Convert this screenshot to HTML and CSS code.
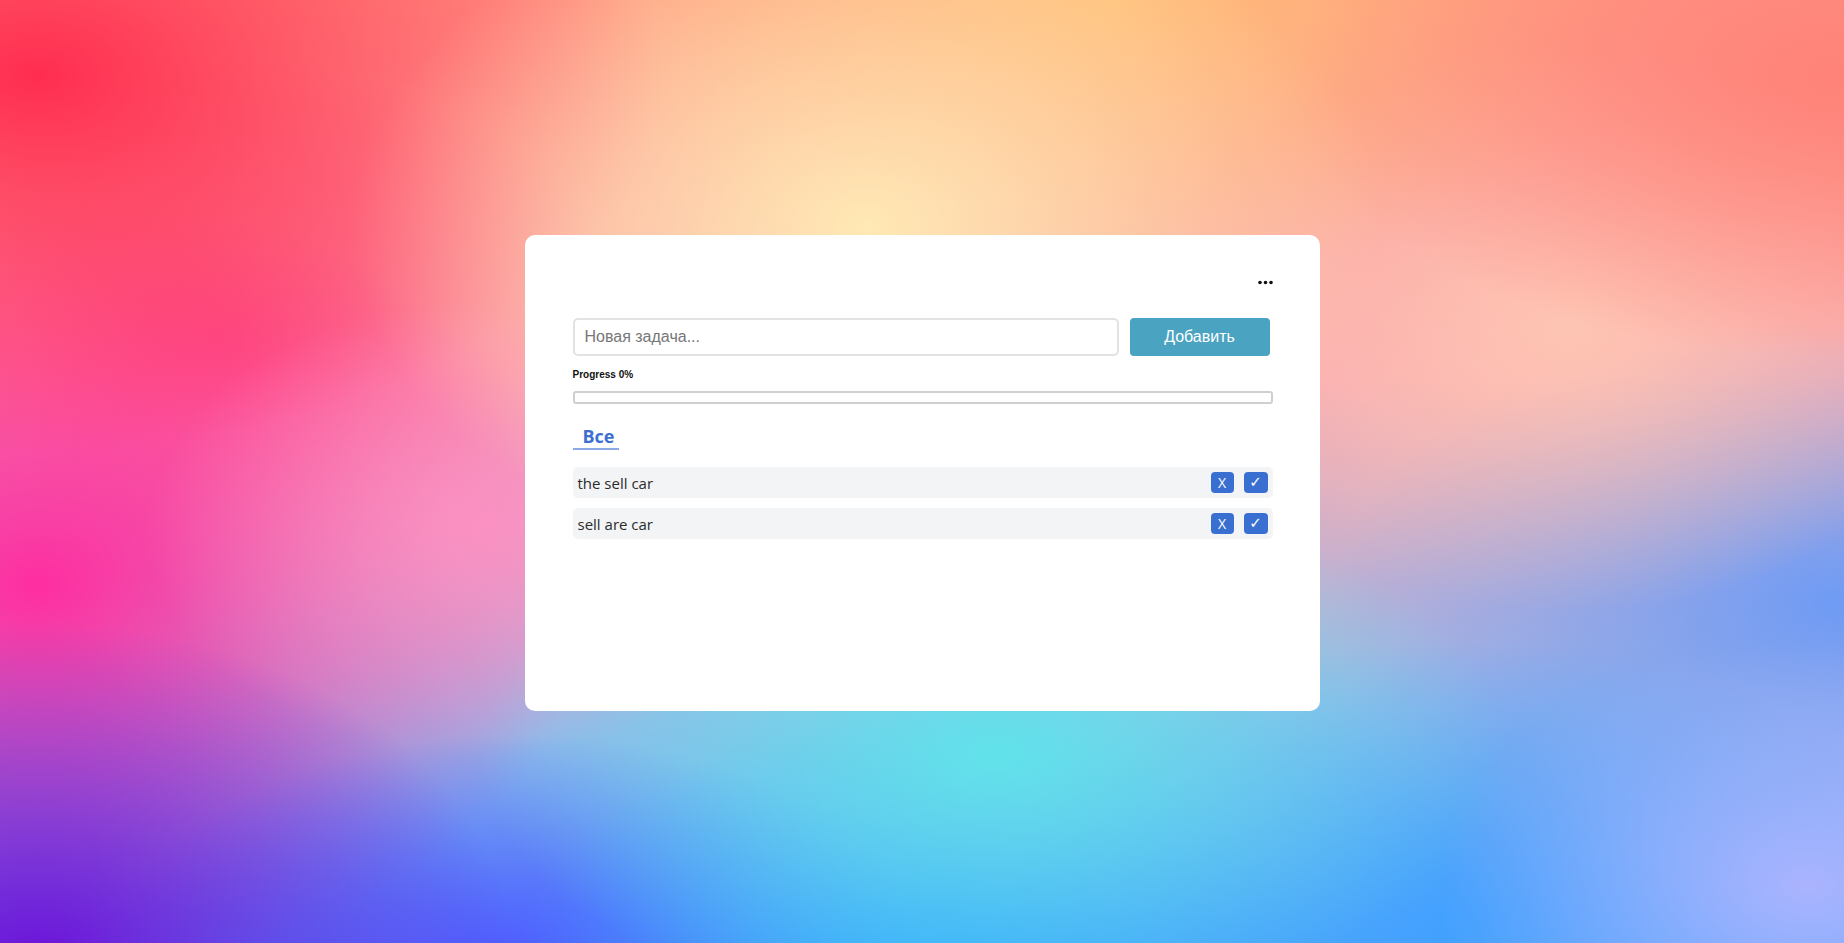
FILE: index.html
```html
<!DOCTYPE html>
<html lang="ru">
<head>
<meta charset="utf-8">
<title>Todo</title>
<link rel="stylesheet" href="styles.css">
</head>
<body>
<div class="page">
  <div class="card">
    <div class="header">
      <button class="menu" aria-label="menu">
        <svg width="15" height="5" viewBox="0 0 15 5"><circle cx="2" cy="2.5" r="1.8" fill="#111"/><circle cx="7.5" cy="2.5" r="1.8" fill="#111"/><circle cx="13" cy="2.5" r="1.8" fill="#111"/></svg>
      </button>
    </div>
    <div class="add-row">
      <input class="task-input" type="text" placeholder="Новая задача...">
      <button class="add-btn">Добавить</button>
    </div>
    <div class="progress-label">Progress 0%</div>
    <div class="progress-bar"><div class="progress-fill"></div></div>
    <div class="tabs">
      <span class="tab active">Все</span>
    </div>
    <ul class="tasks">
      <li class="task">
        <span class="task-text">the sell car</span>
        <span class="actions"><button class="act del">X</button><button class="act done">✓</button></span>
      </li>
      <li class="task">
        <span class="task-text">sell are car</span>
        <span class="actions"><button class="act del">X</button><button class="act done">✓</button></span>
      </li>
    </ul>
  </div>
</div>
</body>
</html>
```
FILE: styles.css
```css
* { box-sizing: border-box; }
html, body { margin: 0; padding: 0; height: 100%; }
body {
  font-family: "Liberation Sans", Arial, sans-serif;
  overflow: hidden;
  background:
    radial-gradient(ellipse 20% 26% at 98% 94%, rgba(175,180,255,0.95), rgba(175,180,255,0) 100%),
    radial-gradient(ellipse 28% 36% at 47% 24%, rgba(255,233,180,1), rgba(255,233,180,0) 100%),
    radial-gradient(ellipse 28% 28% at 54% 80%, rgba(96,226,234,1), rgba(96,226,234,0) 100%),
    radial-gradient(ellipse 26% 30% at 80% 98%, rgba(64,160,255,0.95), rgba(64,160,255,0) 100%),
    radial-gradient(ellipse 22% 26% at 50% 102%, rgba(50,170,255,0.9), rgba(50,170,255,0) 100%),
    radial-gradient(ellipse 26% 36% at 2% 102%, rgba(110,16,215,1), rgba(110,16,215,0) 100%),
    radial-gradient(ellipse 22% 24% at 28% 102%, rgba(80,90,255,1), rgba(80,90,255,0) 100%),
    radial-gradient(ellipse 18% 24% at 26% 56%, rgba(255,145,195,0.9), rgba(255,145,195,0) 100%),
    radial-gradient(ellipse 34% 40% at 2% 8%, rgba(255,45,80,1), rgba(255,45,80,0) 100%),
    radial-gradient(ellipse 30% 42% at 2% 62%, rgba(255,45,160,1), rgba(255,45,160,0) 100%),
    radial-gradient(ellipse 22% 30% at 12% 36%, rgba(255,80,130,0.9), rgba(255,80,130,0) 100%),
    radial-gradient(ellipse 30% 30% at 100% 8%, rgba(255,130,120,1), rgba(255,130,120,0) 100%),
    radial-gradient(ellipse 30% 30% at 60% 0%, rgba(255,190,120,1), rgba(255,190,120,0) 100%),
    radial-gradient(ellipse 22% 30% at 85% 35%, rgba(255,200,180,0.9), rgba(255,200,180,0) 100%),
    radial-gradient(ellipse 28% 30% at 100% 64%, rgba(110,155,245,1), rgba(110,155,245,0) 100%),
    linear-gradient(180deg, #ff9a86 0%, #f9a8b0 40%, #9fb6e6 75%, #55a8f8 100%);
}
.page {
  height: 943px;
  display: flex;
  justify-content: center;
  padding-top: 235px;
}
.card {
  width: 795px;
  height: 476px;
  background: #fff;
  border-radius: 10px;
  padding: 36px 47px 0 48px;
}
.header {
  height: 23px;
  display: flex;
  justify-content: flex-end;
  align-items: center;
}
.menu {
  border: 0;
  background: none;
  padding: 0;
  display: flex;
  cursor: pointer;
}
.add-row {
  margin-top: 24px;
  display: flex;
  gap: 11px;
  width: 697px;
}
.task-input {
  flex: 1;
  height: 38px;
  border: 2px solid #e2e2e2;
  border-radius: 5px;
  padding: 0 10px;
  font-family: "Liberation Sans", Arial, sans-serif;
  font-size: 16px;
  color: #333;
  outline: none;
}
.task-input::placeholder { color: #777; }
.add-btn {
  width: 140px;
  height: 38px;
  border: 0;
  border-radius: 4px;
  background: #4ba3c2;
  color: #fff;
  font-family: "Liberation Sans", Arial, sans-serif;
  font-size: 16px;
  cursor: pointer;
}
.progress-label {
  margin-top: 13px;
  font-size: 10px;
  line-height: 12px;
  font-weight: bold;
  color: #111;
}
.progress-bar {
  margin-top: 10px;
  height: 13px;
  border: 2px solid #cfcfcf;
  border-radius: 3px;
  background: #fff;
}
.progress-fill { width: 0; height: 100%; background: #4ba3c2; }
.tabs {
  margin-top: 20px;
  display: flex;
}
.tab {
  font-family: "Open Sans", sans-serif;
  font-weight: 700;
  font-size: 18px;
  line-height: 24px;
  color: #3d6fd0;
  padding: 0 5px 0 10px;
  border-bottom: 2px solid #8aa7e6;
}
.tasks {
  list-style: none;
  margin: 17px 0 0;
  padding: 0;
  display: flex;
  flex-direction: column;
  gap: 10px;
}
.task {
  height: 31px;
  background: #f3f4f6;
  border-radius: 5px;
  display: flex;
  align-items: center;
  justify-content: space-between;
  padding: 0 5px 0 5px;
}
.task-text {
  font-family: "Open Sans", sans-serif;
  font-size: 15px;
  color: #2b2b2b;
}
.actions { display: flex; gap: 10px; }
.act {
  height: 21px;
  border: 0;
  border-radius: 4px;
  background: #3a6fd2;
  color: #fff;
  font-family: "Open Sans", sans-serif;
  font-size: 14px;
  line-height: 21px;
  padding: 0;
  cursor: pointer;
}
.act.del { width: 23px; }
.act.done { width: 24px; font-family: "DejaVu Sans", sans-serif; font-size: 15px; }
```
